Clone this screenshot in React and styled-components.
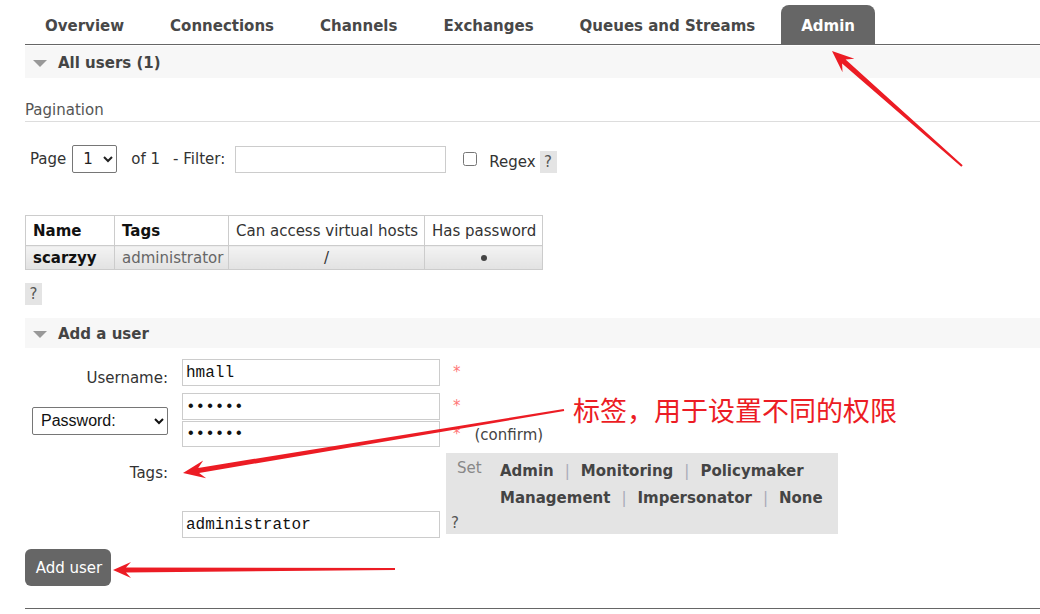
import React from "react";
import styled, { createGlobalStyle } from "styled-components";

const TABS = ["Overview", "Connections", "Channels", "Exchanges", "Queues and Streams", "Admin"];
const TAG_ROWS = [
  ["Admin", "Monitoring", "Policymaker"],
  ["Management", "Impersonator", "None"],
];

const GlobalStyle = createGlobalStyle`
  html, body { margin: 0; padding: 0; background: #fff; }
  body {
    font-family: "DejaVu Sans", Verdana, sans-serif;
    font-size: 15px;
    color: #484848;
  }
  * { box-sizing: border-box; }
`;

const arrowPoints = (x1, y1, x2, y2, head = 20, wing = 8, tail = 1, neck = 2.6) => {
  const dx = x2 - x1;
  const dy = y2 - y1;
  const len = Math.hypot(dx, dy);
  const ux = dx / len;
  const uy = dy / len;
  const nx = -uy;
  const ny = ux;
  const at = (d, w) => [x2 - ux * d + nx * w, y2 - uy * d + ny * w];
  return [
    [x1 + nx * tail, y1 + ny * tail],
    at(head * 0.72, neck),
    at(head, wing),
    [x2, y2],
    at(head, -wing),
    at(head * 0.72, -neck),
    [x1 - nx * tail, y1 - ny * tail],
  ]
    .map((p) => p.map((v) => v.toFixed(1)).join(","))
    .join(" ");
};

const App = () => {
  return (
    <Page>
      <GlobalStyle />
      <Nav>
        {TABS.map((t) => (
          <Tab key={t} $active={t === "Admin"}>{t}</Tab>
        ))}
      </Nav>

      <SectionHeader $top={1} $h={32}>
        <Caret />
        All users (1)
      </SectionHeader>

      <SubHeading>Pagination</SubHeading>

      <FilterRow>
        <Text>Page</Text>
        <PageSelect $ml={6} defaultValue="1">
          <option value="1">1</option>
        </PageSelect>
        <Text $ml={14}>of 1</Text>
        <Text $ml={13}>- Filter:</Text>
        <FilterInput $ml={10} type="text" />
        <RegexGroup>
          <Check type="checkbox" />
          <Text $ml={12}>Regex</Text>
          <Help $ml={4}>?</Help>
        </RegexGroup>
      </FilterRow>

      <UsersTable>
        <colgroup>
          <col style={{ width: 89 }} />
          <col style={{ width: 114 }} />
          <col style={{ width: 196 }} />
          <col style={{ width: 118 }} />
        </colgroup>
        <thead>
          <tr>
            <Th $bold>Name</Th>
            <Th $bold>Tags</Th>
            <Th>Can access virtual hosts</Th>
            <Th>Has password</Th>
          </tr>
        </thead>
        <tbody>
          <tr>
            <Td $bold>scarzyy</Td>
            <Td $muted>administrator</Td>
            <Td $center>/</Td>
            <Td $center><Dot /></Td>
          </tr>
        </tbody>
      </UsersTable>

      <HelpBlock>?</HelpBlock>

      <SectionHeader $top={13} $h={30}>
        <Caret />
        Add a user
      </SectionHeader>

      <FormGrid>
        <FieldLabel $top={11}>Username:</FieldLabel>
        <FieldCell>
          <TextInput type="text" defaultValue="hmall" />
        </FieldCell>
        <Extras>
          <Star>*</Star>
        </Extras>

        <SelectCell>
          <PasswordSelect defaultValue="pw">
            <option value="pw">Password:</option>
          </PasswordSelect>
        </SelectCell>
        <FieldCell>
          <Stack>
            <TextInput type="password" defaultValue="123456" />
            <TextInput type="password" defaultValue="123456" $h={26} />
          </Stack>
        </FieldCell>
        <Extras>
          <StarLine><Star>*</Star></StarLine>
          <StarLine><Star>*</Star><Confirm>(confirm)</Confirm></StarLine>
        </Extras>

        <FieldLabel $top={12}>Tags:</FieldLabel>
        <FieldCell $end>
          <TextInput type="text" defaultValue="administrator" />
        </FieldCell>
        <TagsBox>
          <SetLabel>Set</SetLabel>
          <TagLinks>
            {TAG_ROWS.map((row, i) => (
              <TagLine key={i}>
                {row.map((tag, j) => (
                  <React.Fragment key={tag}>
                    {j > 0 && <Sep>|</Sep>}
                    <TagLink>{tag}</TagLink>
                  </React.Fragment>
                ))}
              </TagLine>
            ))}
          </TagLinks>
          <TagHelp>?</TagHelp>
        </TagsBox>
      </FormGrid>

      <AddButton type="button">Add user</AddButton>
      <BottomRule />

      <Arrows width="1040" height="614" viewBox="0 0 1040 614">
        <polygon points={arrowPoints(962, 166, 832, 51, 22, 9)} fill="#ec1c24" />
        <polygon points={arrowPoints(564, 410, 183, 473, 22, 9)} fill="#ec1c24" />
        <polygon points={arrowPoints(395, 569, 113, 570, 18, 8)} fill="#ec1c24" />
      </Arrows>
      <Note>标签，用于设置不同的权限</Note>
    </Page>
  );
};

export default App;

const Page = styled.div`
  position: relative;
  width: 1040px;
  height: 614px;
  overflow: hidden;
  padding-left: 25px;
`;

const Nav = styled.ul`
  display: flex;
  height: 45px;
  margin: 0;
  padding: 5px 0 0;
  list-style: none;
  border-bottom: 1px solid #666;
`;

const Tab = styled.li`
  display: flex;
  align-items: center;
  padding: 2px 20px 0;
  margin-right: 6px;
  font-weight: bold;
  color: ${(p) => (p.$active ? "#fff" : "#484848")};
  background: ${(p) => (p.$active ? "#666" : "transparent")};
  border-radius: 8px 8px 0 0;
`;

const SectionHeader = styled.div`
  display: flex;
  align-items: center;
  height: ${(p) => p.$h}px;
  margin-top: ${(p) => p.$top}px;
  padding: 2px 0 0 8px;
  background: #f7f7f7;
  font-weight: bold;
  color: #444;
`;

const Caret = styled.span`
  width: 0;
  height: 0;
  margin-right: 11px;
  border-left: 7px solid transparent;
  border-right: 7px solid transparent;
  border-top: 7px solid #999;
`;

const SubHeading = styled.h3`
  margin: 24px 0 0;
  padding-bottom: 2px;
  font-size: 15px;
  line-height: 17px;
  font-weight: normal;
  color: #555;
  border-bottom: 1px solid #ddd;
`;

const FilterRow = styled.div`
  display: flex;
  align-items: center;
  height: 28px;
  margin-top: 23px;
  padding-left: 5px;
`;

const Text = styled.span`
  margin-left: ${(p) => p.$ml || 0}px;
  color: #333;
  white-space: nowrap;
`;

const PageSelect = styled.select`
  width: 45px;
  height: 28px;
  margin-left: ${(p) => p.$ml || 0}px;
  padding: 0 0 0 6px;
  font-family: "DejaVu Sans", Verdana, sans-serif;
  font-size: 15px;
  color: #222;
  background: #fff;
  border: 1px solid #767676;
  border-radius: 2px;
`;

const FilterInput = styled.input`
  width: 211px;
  height: 27px;
  margin-left: ${(p) => p.$ml || 0}px;
  border: 1px solid #ccc;
  background: #fff;
`;

const RegexGroup = styled.div`
  display: flex;
  align-items: center;
  margin-left: 17px;
  margin-top: 5px;
`;

const Check = styled.input`
  width: 14px;
  height: 14px;
  margin: -6px 0 0;
`;

const Help = styled.span`
  display: inline-flex;
  align-items: center;
  justify-content: center;
  width: 17px;
  height: 22px;
  margin-left: ${(p) => p.$ml || 0}px;
  background: #e4e4e4;
  color: #555;
`;

const UsersTable = styled.table`
  width: 517px;
  margin-top: 42px;
  border-collapse: collapse;
  table-layout: fixed;
`;

const Th = styled.th`
  height: 30px;
  padding: 0 7px;
  text-align: left;
  font-weight: ${(p) => (p.$bold ? "bold" : "normal")};
  color: ${(p) => (p.$bold ? "#111" : "#333")};
  border: 1px solid #ccc;
  background: #fff;
  white-space: nowrap;
`;

const Td = styled.td`
  height: 24px;
  padding: 0 7px;
  text-align: ${(p) => (p.$center ? "center" : "left")};
  font-weight: ${(p) => (p.$bold ? "bold" : "normal")};
  color: ${(p) => (p.$muted ? "#666" : p.$bold ? "#111" : "#333")};
  border: 1px solid #ccc;
  background: linear-gradient(#f3f3f3, #e2e2e2);
  white-space: nowrap;
`;

const Dot = styled.span`
  display: inline-block;
  width: 6px;
  height: 6px;
  border-radius: 50%;
  background: #444;
  vertical-align: middle;
`;

const HelpBlock = styled(Help)`
  display: flex;
  margin-top: 13px;
`;

const FormGrid = styled.div`
  display: grid;
  grid-template-columns: 143px 272px 1fr;
  grid-template-rows: 34px 60px 85px;
  margin-top: 11px;
`;

const FieldLabel = styled.div`
  padding-top: ${(p) => p.$top || 10}px;
  line-height: 16px;
  text-align: right;
  color: #333;
`;

const SelectCell = styled.div`
  display: flex;
  align-items: center;
  justify-content: flex-end;
  height: 55px;
`;

const FieldCell = styled.div`
  display: flex;
  align-items: ${(p) => (p.$end ? "flex-end" : "flex-start")};
  padding-left: 14px;
`;

const Stack = styled.div`
  display: flex;
  flex-direction: column;
  gap: 1px;
`;

const TextInput = styled.input`
  width: 258px;
  height: ${(p) => p.$h || 27}px;
  padding: 0 3px;
  font-family: "Liberation Mono", "Courier New", monospace;
  font-size: 16px;
  color: #111;
  border: 1px solid #ccc;
  background: #fff;
`;

const PasswordSelect = styled.select`
  width: 136px;
  height: 28px;
  padding-left: 4px;
  font-family: "Liberation Sans", Arial, sans-serif;
  font-size: 16px;
  color: #111;
  background: #fff;
  border: 1px solid #767676;
  border-radius: 2px;
`;

const Extras = styled.div`
  display: flex;
  flex-direction: column;
  padding-left: 13px;
`;

const StarLine = styled.div`
  display: flex;
  height: 28px;
`;

const Star = styled.span`
  padding-top: 5px;
  color: #f77;
  line-height: 16px;
`;

const Confirm = styled.span`
  margin-left: 14px;
  padding-top: 6px;
  line-height: 16px;
  color: #444;
`;

const TagsBox = styled.div`
  display: grid;
  grid-template-columns: 43px auto;
  width: 392px;
  height: 81px;
  margin-left: 6px;
  padding: 4px 0 2px 11px;
  background: #e4e4e4;
`;

const SetLabel = styled.span`
  line-height: 27px;
  margin-top: -2px;
  color: #888;
`;

const TagLinks = styled.div`
  display: flex;
  flex-direction: column;
`;

const TagLine = styled.div`
  display: flex;
  align-items: center;
  height: 27px;
`;

const TagLink = styled.span`
  font-weight: bold;
  color: #444;
`;

const Sep = styled.span`
  margin: 0 11px;
  color: #a8aab8;
`;

const TagHelp = styled.span`
  grid-column: 1 / -1;
  margin-left: -6px;
  padding-top: 2px;
  line-height: 20px;
  color: #555;
`;

const AddButton = styled.button`
  display: block;
  width: 86px;
  height: 37px;
  margin-top: 11px;
  padding: 0 0 0 2px;
  font-family: "DejaVu Sans", Verdana, sans-serif;
  font-size: 15px;
  color: #fff;
  background: #666;
  border: none;
  border-radius: 6px;
`;

const BottomRule = styled.div`
  margin-top: 22px;
  border-top: 1px solid #666;
`;

const Arrows = styled.svg`
  position: absolute;
  left: 0;
  top: 0;
  pointer-events: none;
`;

const Note = styled.span`
  position: absolute;
  left: 573px;
  top: 396px;
  font-family: "Noto Sans CJK SC", sans-serif;
  font-size: 27px;
  line-height: 27px;
  color: #ec1c24;
  white-space: nowrap;
`;
